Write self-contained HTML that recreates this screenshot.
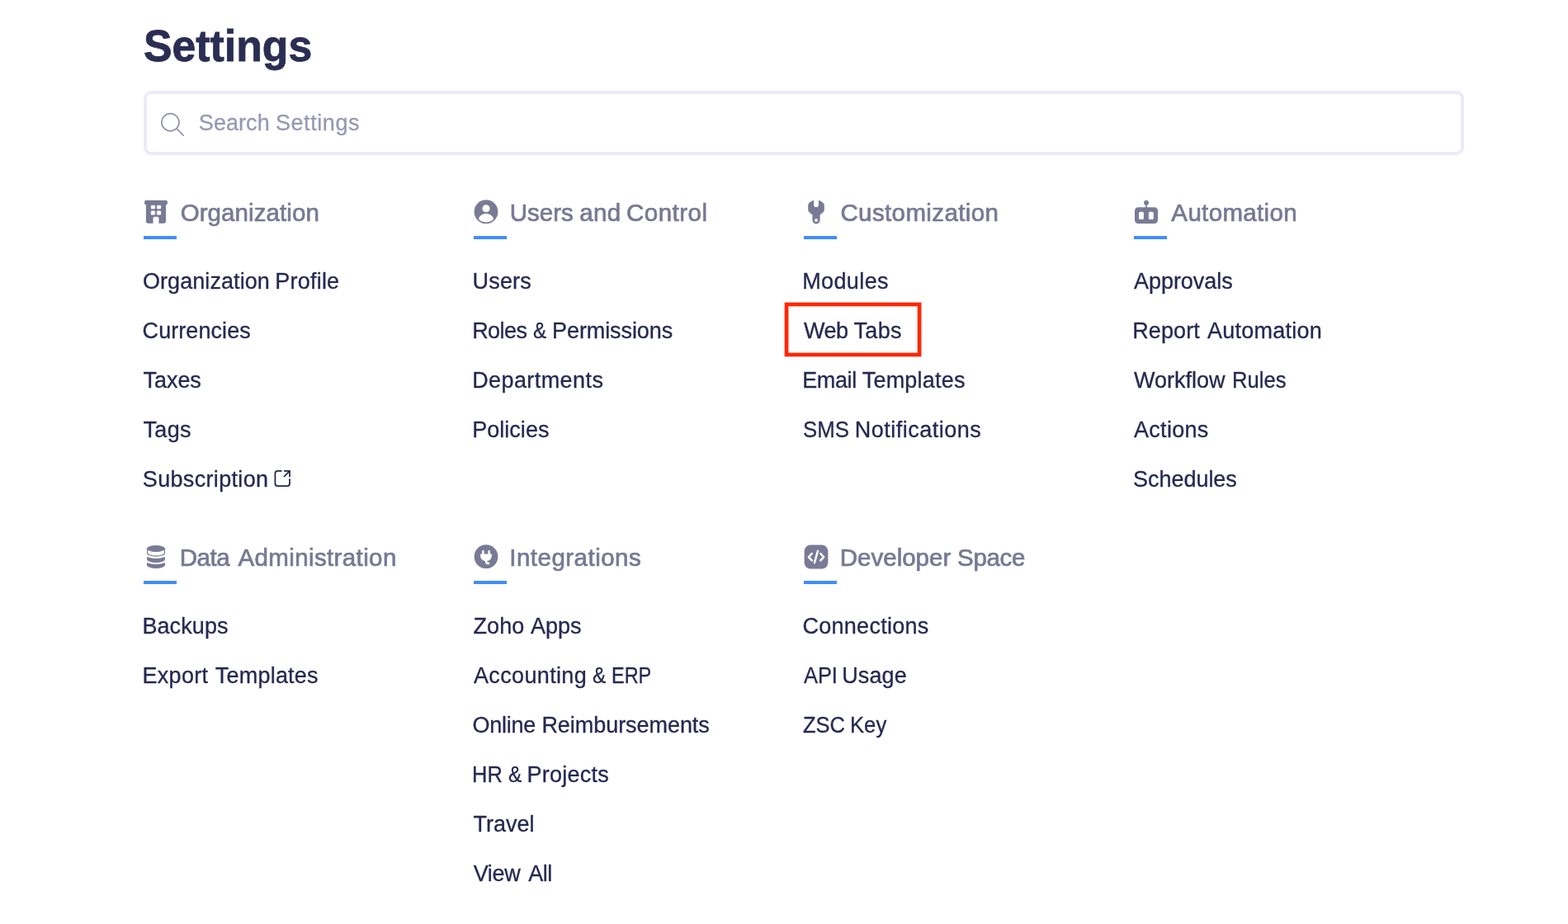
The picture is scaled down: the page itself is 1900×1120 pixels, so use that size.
<!DOCTYPE html>
<html lang="en">
<head>
<meta charset="utf-8">
<title>Settings</title>
<style>
*{box-sizing:border-box;margin:0;padding:0}
html,body{width:1900px;height:1120px;overflow:hidden;background:#fff}
body{font-family:"Liberation Sans",sans-serif;color:#22264a;position:relative;will-change:transform}
h1{position:absolute;left:174px;top:24.5px;font-size:54px;line-height:60px;font-weight:700;color:#2b2e52;white-space:nowrap;-webkit-text-stroke:0.8px #2b2e52}
.w{display:inline-block;white-space:nowrap;transform-origin:0 50%}
.ph,li a{white-space:nowrap}
.search{position:absolute;left:174px;top:110px;width:1600px;height:78px;border:4px solid #ebebf8;border-radius:9px;background:#fff}
.sico{position:absolute;left:0;top:0}
.ph{position:absolute;left:64px;top:19px;font-size:27px;line-height:32px;color:#9799b4;-webkit-text-stroke:0.3px #9799b4}
section{position:absolute;width:400px;height:440px}
.c174{left:174px}.c574{left:574px}.c974{left:974px}.c1374{left:1374px}
.r0{top:241px}.r1{top:659px}
h2{position:absolute;left:45px;top:-0.3px;font-size:29.5px;line-height:34px;font-weight:400;color:#777993;white-space:nowrap;-webkit-text-stroke:0.7px #777993}
.ico{position:absolute;left:0;top:0}
.bar{position:absolute;left:0;top:45px;width:40px;height:4px;background:#408dfb}
ul{position:absolute;left:0;top:70px;list-style:none}
li{height:60px;line-height:60px;font-size:27px;white-space:nowrap}
li a{color:#252950;text-decoration:none;-webkit-text-stroke:0.3px #252950}
li{position:relative}
.ext{position:absolute;left:157.6px;top:18.2px}
.hl{position:absolute;left:946px;top:362px}
</style>
</head>
<body>
<h1><span class="w" style="margin-left:-0.05px;transform:scaleX(0.9587)">Settings</span></h1>
<div class="search">
<svg class="sico" width="60" height="70" viewBox="0 0 60 70" aria-hidden="true" fill="none" stroke="#9395b1" stroke-width="1.7" stroke-linecap="round"><circle cx="28.45" cy="34.25" r="10.55"/><path d="M36 41.8 L44.2 50.2"/></svg>
<span class="ph"><span class="w" style="letter-spacing:0.06px;margin-left:-1.16px">Search</span> <span class="w" style="letter-spacing:0.59px;margin-left:-0.40px">Settings</span></span>
</div>

<section class="c174 r0">
<svg class="ico" width="32" height="32" viewBox="0 0 32 32" aria-hidden="true"><g fill="#797b96"><rect x="1.1" y="1.8" width="27.8" height="5.4" rx="1.6"/><path d="M2.9 5 H27.1 V27 a2.8 2.8 0 0 1 -2.8 2.8 H18.5 V23.6 a1.8 1.8 0 0 0 -1.8 -1.8 H13.3 a1.8 1.8 0 0 0 -1.8 1.8 V29.8 H5.7 a2.8 2.8 0 0 1 -2.8 -2.8 Z"/></g><g fill="#fff"><rect x="8.8" y="7.7" width="5.2" height="4.6" rx="1.2"/><rect x="15.9" y="7.7" width="5.2" height="4.6" rx="1.2"/><rect x="8.8" y="14.4" width="5.2" height="5.1" rx="1.2"/><rect x="15.9" y="14.4" width="5.2" height="5.1" rx="1.2"/></g></svg>
<h2><span class="w" style="letter-spacing:0.09px;margin-left:-0.37px">Organization</span></h2><div class="bar"></div>
<ul>
<li><a><span class="w" style="letter-spacing:0.07px;margin-left:-1.05px">Organization</span> <span class="w" style="letter-spacing:0.22px;margin-left:-1.15px">Profile</span></a></li>
<li><a><span class="w" style="letter-spacing:0.07px;margin-left:-1.44px">Currencies</span></a></li>
<li><a><span class="w" style="letter-spacing:-0.07px;margin-left:-0.40px">Taxes</span></a></li>
<li><a><span class="w" style="letter-spacing:0.25px;margin-left:-0.40px">Tags</span></a></li>
<li><a><span class="w" style="letter-spacing:0.33px;margin-left:-1.18px">Subscription</span></a><svg class="ext" width="22" height="22" viewBox="0 0 22 22" aria-hidden="true" fill="none" stroke="#22264a" stroke-width="1.75" stroke-linecap="butt" stroke-linejoin="miter"><path d="M9.6 1.9 H4.4 a3 3 0 0 0 -3 3 V17 a3 3 0 0 0 3 3 H16 a3 3 0 0 0 3 -3 V11.3"/><path d="M12 1.9 H19 V8.9 M19 1.9 L11.9 9"/></svg></li>
</ul>
</section>

<section class="c574 r0">
<svg class="ico" width="32" height="32" viewBox="0 0 32 32" aria-hidden="true"><circle cx="15" cy="15.7" r="14.4" fill="#797b96"/><circle cx="15" cy="11.8" r="4.55" fill="#fff"/><path d="M5.8 24.6 C7 20.7 10.6 18.1 15 18.1 C19.4 18.1 23 20.7 24.2 24.6 A12.9 12.9 0 0 1 5.8 24.6 Z" fill="#fff"/></svg>
<h2><span class="w" style="margin-left:-1.27px">Users</span> <span class="w" style="letter-spacing:0.27px;margin-left:-0.64px">and</span> <span class="w" style="letter-spacing:0.50px;margin-left:-1.65px">Control</span></h2><div class="bar"></div>
<ul>
<li><a><span class="w" style="letter-spacing:0.17px;margin-left:-1.42px">Users</span></a></li>
<li><a><span class="w" style="letter-spacing:-0.54px;margin-left:-1.86px">Roles</span> <span class="w" style="margin-left:-0.10px;transform:scaleX(0.9015)">&amp;</span> <span class="w" style="letter-spacing:-0.10px;margin-left:-2.34px">Permissions</span></a></li>
<li><a><span class="w" style="letter-spacing:0.42px;margin-left:-1.86px">Departments</span></a></li>
<li><a><span class="w" style="letter-spacing:0.04px;margin-left:-1.86px">Policies</span></a></li>
</ul>
</section>

<section class="c974 r0">
<svg class="ico" width="32" height="32" viewBox="0 0 32 32" aria-hidden="true"><path d="M11.3 1.7 L6.9 4.6 Q5.2 5.8 5.2 7.8 V13.4 Q5.2 15.4 6.9 16.6 L10.4 19.4 V25.8 A4.6 4.6 0 0 0 19.6 25.8 V19.4 L23.1 16.6 Q24.8 15.4 24.8 13.4 V7.8 Q24.8 5.8 23.1 4.6 L18.7 1.7 Q17.9 1.4 17.9 2.4 V7.2 A2.9 2.9 0 0 1 12.1 7.2 V2.4 Q12.1 1.4 11.3 1.7 Z" fill="#797b96"/><circle cx="15" cy="25.9" r="1.85" fill="#fff"/></svg>
<h2><span class="w" style="letter-spacing:0.38px;margin-left:-0.57px">Customization</span></h2><div class="bar"></div>
<ul>
<li><a><span class="w" style="letter-spacing:0.40px;margin-left:-1.86px">Modules</span></a></li>
<li><a><span class="w" style="letter-spacing:-0.56px">Web</span> <span class="w" style="letter-spacing:0.39px;margin-left:-0.48px">Tabs</span></a></li>
<li><a><span class="w" style="letter-spacing:-0.36px;margin-left:-1.86px">Email</span> <span class="w" style="letter-spacing:0.21px;margin-left:-0.67px">Templates</span></a></li>
<li><a><span class="w" style="margin-left:-0.94px;transform:scaleX(0.9541)">SMS</span> <span class="w" style="letter-spacing:0.51px;margin-left:-3.45px">Notifications</span></a></li>
</ul>
</section>

<section class="c1374 r0">
<svg class="ico" width="32" height="32" viewBox="0 0 32 32" aria-hidden="true"><g fill="#797b96"><rect x="1" y="10.2" width="28" height="19.8" rx="4.2"/><circle cx="15" cy="4.65" r="2.95"/><rect x="14.15" y="6" width="1.7" height="5"/></g><g fill="#fff"><rect x="6" y="15.7" width="5.9" height="9.3" rx="1.6"/><rect x="17.9" y="15.7" width="5.9" height="9.3" rx="1.6"/></g></svg>
<h2><span class="w" style="letter-spacing:0.34px;margin-left:0.37px">Automation</span></h2><div class="bar"></div>
<ul>
<li><a><span class="w" style="letter-spacing:-0.04px">Approvals</span></a></li>
<li><a><span class="w" style="letter-spacing:0.12px;margin-left:-1.86px">Report</span> <span class="w" style="letter-spacing:0.25px;margin-left:1.54px">Automation</span></a></li>
<li><a><span class="w">Workflow</span> <span class="w" style="margin-left:0.79px;transform:scaleX(0.9501)">Rules</span></a></li>
<li><a><span class="w" style="letter-spacing:0.29px">Actions</span></a></li>
<li><a><span class="w" style="letter-spacing:-0.04px;margin-left:-0.94px">Schedules</span></a></li>
</ul>
</section>

<section class="c174 r1">
<svg class="ico" width="32" height="32" viewBox="0 0 32 32" aria-hidden="true"><g fill="#797b96"><ellipse cx="15" cy="6" rx="11" ry="4"/><path d="M4 16 Q15 19.8 26 16 V19 A11 4 0 0 1 4 19 Z"/><path d="M4 23.1 Q15 27 26 23.1 V26 A11 4 0 0 1 4 26 Z"/></g><path d="M4.6 6 V11.4 A10.4 3.7 0 0 0 25.4 11.4 V6" fill="none" stroke="#797b96" stroke-width="1.2"/></svg>
<h2><span class="w" style="letter-spacing:-0.52px;margin-left:-1.22px">Data</span> <span class="w" style="letter-spacing:0.38px;margin-left:2.22px">Administration</span></h2><div class="bar"></div>
<ul>
<li><a><span class="w" style="letter-spacing:0.10px;margin-left:-1.61px">Backups</span></a></li>
<li><a><span class="w" style="letter-spacing:0.34px;margin-left:-1.61px">Export</span> <span class="w" style="letter-spacing:0.21px;margin-left:0.84px">Templates</span></a></li>
</ul>
</section>

<section class="c574 r1">
<svg class="ico" width="32" height="32" viewBox="0 0 32 32" aria-hidden="true"><circle cx="15" cy="15.7" r="14.4" fill="#797b96"/><path d="M10.1 9 a1 1 0 0 1 1 -1 h0.5 a1 1 0 0 1 1 1 V12.5 H17.4 V9 a1 1 0 0 1 1 -1 h0.5 a1 1 0 0 1 1 1 V12.5 H21.9 V14.2 A6.9 6.9 0 0 1 16.2 21 V21.6 Q16.2 22.6 17.4 22.6 H18 A1.3 1.3 0 0 1 18 25.2 H17.4 Q13.8 25.2 13.8 21.6 V21 A6.9 6.9 0 0 1 8.1 14.2 V12.5 H10.1 Z" fill="#fff"/></svg>
<h2><span class="w" style="letter-spacing:0.49px;margin-left:-1.79px">Integrations</span></h2><div class="bar"></div>
<ul>
<li><a><span class="w" style="letter-spacing:0.12px;margin-left:-0.60px">Zoho</span> <span class="w">Apps</span></a></li>
<li><a><span class="w" style="letter-spacing:0.35px">Accounting</span> <span class="w" style="margin-left:-0.98px;transform:scaleX(0.9042)">&amp;</span> <span class="w" style="margin-left:-1.74px;transform:scaleX(0.8691)">ERP</span></a></li>
<li><a><span class="w" style="letter-spacing:-0.29px;margin-left:-1.46px">Online</span> <span class="w" style="letter-spacing:-0.05px;margin-left:0.03px">Reimbursements</span></a></li>
<li><a><span class="w" style="margin-left:-2.00px;transform:scaleX(0.9425)">HR</span> <span class="w" style="margin-left:-2.56px;transform:scaleX(0.9037)">&amp;</span> <span class="w" style="letter-spacing:0.26px;margin-left:-3.05px">Projects</span></a></li>
<li><a><span class="w" style="margin-left:-0.56px">Travel</span></a></li>
<li><a><span class="w" style="letter-spacing:-0.36px;margin-left:-0.34px">View</span> <span class="w" style="letter-spacing:-0.39px;margin-left:2.34px">All</span></a></li>
</ul>
</section>

<section class="c974 r1">
<svg class="ico" width="32" height="32" viewBox="0 0 32 32" aria-hidden="true"><rect x="0.6" y="1.4" width="28.8" height="29" rx="7.6" fill="#797b96"/><g fill="none" stroke="#fff" stroke-width="2.5" stroke-linecap="round" stroke-linejoin="round"><path d="M9.7 12 L5.9 16.25 L9.7 20.4"/><path d="M20.3 12 L24.1 16.25 L20.3 20.4"/><path d="M17 8.9 L12.9 23.1"/></g></svg>
<h2><span class="w" style="margin-left:-1.22px">Developer</span> <span class="w" style="letter-spacing:-0.30px;margin-left:-0.43px">Space</span></h2><div class="bar"></div>
<ul>
<li><a><span class="w" style="letter-spacing:0.25px;margin-left:-1.44px">Connections</span></a></li>
<li><a><span class="w" style="transform:scaleX(0.9397)">API</span> <span class="w" style="letter-spacing:0.09px;margin-left:-4.80px">Usage</span></a></li>
<li><a><span class="w" style="margin-left:-0.81px;transform:scaleX(0.9442)">ZSC</span> <span class="w" style="margin-left:-4.31px;transform:scaleX(0.9509)">Key</span></a></li>
</ul>
</section>

<svg class="hl" width="180" height="80" viewBox="0 0 180 80" aria-hidden="true"><rect x="7.05" y="6.95" width="161" height="61" fill="none" stroke="#ff2600" stroke-width="4.7"/></svg>

</body>
</html>
